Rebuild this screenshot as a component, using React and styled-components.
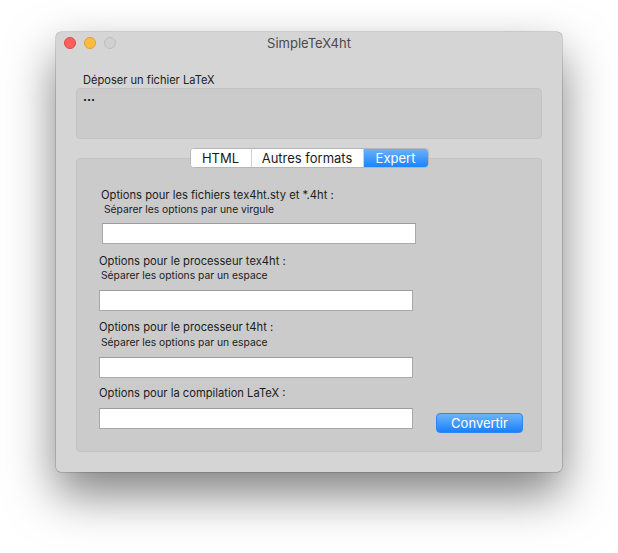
import React from "react";
import styled, { createGlobalStyle } from "styled-components";

const GlobalStyle = createGlobalStyle`
  html, body {
    margin: 0;
    padding: 0;
    background: #ffffff;
  }
  body {
    font-family: Inter, "Liberation Sans", Arial, sans-serif;
    -webkit-font-smoothing: antialiased;
  }
`;

const Page = styled.div`
  width: 618px;
  height: 553px;
  padding: 32px 0 0 56px;
  box-sizing: border-box;
  overflow: hidden;
`;

const Window = styled.div`
  width: 506px;
  height: 440px;
  background: #d5d5d5;
  border-radius: 5px;
  box-shadow: 0 0 0 0.5px rgba(0, 0, 0, 0.28), 0 22px 48px rgba(0, 0, 0, 0.5);
  display: flex;
  flex-direction: column;
  padding: 0 20px 20px;
  box-sizing: border-box;
`;

const TitleBar = styled.div`
  position: relative;
  height: 22px;
  margin: 0 -20px;
  display: flex;
  align-items: center;
  justify-content: center;
`;

const Lights = styled.div`
  position: absolute;
  left: 8px;
  top: 5px;
  display: flex;
  gap: 8px;
`;

const Light = styled.span`
  width: 12px;
  height: 12px;
  border-radius: 50%;
  box-sizing: border-box;
  background: ${(p) => p.$fill};
  border: 0.5px solid ${(p) => p.$edge};
`;

const Title = styled.div`
  font-size: 13px;
  color: #4b4b4b;
  line-height: 22px;
`;

const DropLabel = styled.div`
  margin: 19px 0 1px 7px;
  font-size: 11.1px;
  line-height: 14px;
  color: #222;
`;

const DropBox = styled.div`
  height: 51px;
  box-sizing: border-box;
  background: #cbcbcb;
  border: 1px solid #c3c3c3;
  border-radius: 4px;
  padding: 1px 6px;
  font-size: 12px;
  font-weight: 700;
  line-height: 14px;
  color: #111;
`;

const TabArea = styled.div`
  margin-top: 9px;
  display: flex;
  flex-direction: column;
  align-items: center;
`;

const Segmented = styled.div`
  position: relative;
  z-index: 1;
  display: flex;
  height: 20px;
  box-sizing: border-box;
  background: #fff;
  border: 1px solid #b6b6b6;
  border-radius: 4px;
  overflow: hidden;
`;

const Segment = styled.div`
  width: ${(p) => p.$w}px;
  display: flex;
  align-items: center;
  justify-content: center;
  font-size: 13px;
  color: ${(p) => (p.$active ? "#fff" : "#1a1a1a")};
  background: ${(p) =>
    p.$active ? "linear-gradient(to bottom, #69b1fa, #1c84fb)" : "#fff"};
  & + & {
    border-left: 1px solid #d0d0d0;
  }
`;

const TabBox = styled.div`
  align-self: stretch;
  margin-top: -10px;
  height: 294px;
  box-sizing: border-box;
  background: #cbcbcb;
  border: 1px solid #c3c3c3;
  border-radius: 4px;
  padding-top: 29px;
  display: flex;
  flex-direction: column;
  align-items: flex-start;
`;

const Label = styled.div`
  margin: ${(p) => p.$top || 0}px 0 0 ${(p) => p.$left}px;
  font-size: 11.2px;
  line-height: 14px;
  color: #1c1c1c;
  white-space: nowrap;
`;

const Hint = styled.div`
  margin: ${(p) => p.$top || 0}px 0 0 ${(p) => p.$left}px;
  font-size: 10.3px;
  line-height: 14px;
  color: #1c1c1c;
  white-space: nowrap;
`;

const Field = styled.input`
  display: block;
  margin: ${(p) => p.$top}px 0 0 ${(p) => p.$left}px;
  width: ${(p) => p.$w}px;
  height: 21px;
  box-sizing: border-box;
  border: 1px solid #a9a9a9;
  border-top-color: #9c9c9c;
  background: #fff;
  outline: none;
  padding: 0 3px;
  font-size: 12px;
`;

const Row = styled.div`
  display: flex;
  align-items: flex-start;
`;

const Button = styled.button`
  margin: 13px 0 0 23px;
  width: 87px;
  height: 20px;
  box-sizing: border-box;
  border: 1px solid #2f86ef;
  border-radius: 4px;
  background: linear-gradient(to bottom, #6db4fb, #1a80fb);
  color: #fff;
  font-family: inherit;
  font-size: 13px;
  padding: 0;
  line-height: 18px;
`;

export default function App() {
  return (
    <>
      <GlobalStyle />
      <Page>
        <Window>
          <TitleBar>
            <Lights>
              <Light $fill="#fc605c" $edge="#de4a44" />
              <Light $fill="#fdbc40" $edge="#de9f34" />
              <Light $fill="#d1d1d1" $edge="#bdbdbd" />
            </Lights>
            <Title>SimpleTeX4ht</Title>
          </TitleBar>

          <DropLabel>Déposer un fichier LaTeX</DropLabel>
          <DropBox>...</DropBox>

          <TabArea>
            <Segmented>
              <Segment $w={60}>HTML</Segment>
              <Segment $w={111}>Autres formats</Segment>
              <Segment $w={64} $active>Expert</Segment>
            </Segmented>
            <TabBox>
              <Label $left={24}>Options pour les fichiers tex4ht.sty et *.4ht :</Label>
              <Hint $left={27}>Séparer les options par une virgule</Hint>
              <Field $top={7} $left={25} $w={314} />

              <Label $top={10} $left={22}>Options pour le processeur tex4ht :</Label>
              <Hint $left={24}>Séparer les options par un espace</Hint>
              <Field $top={8} $left={22} $w={314} />

              <Label $top={9} $left={22}>Options pour le processeur t4ht :</Label>
              <Hint $top={1} $left={24}>Séparer les options par un espace</Hint>
              <Field $top={8} $left={22} $w={314} />

              <Label $top={8} $left={22}>Options pour la compilation LaTeX :</Label>
              <Row>
                <Field $top={8} $left={22} $w={314} />
                <Button>Convertir</Button>
              </Row>
            </TabBox>
          </TabArea>
        </Window>
      </Page>
    </>
  );
}
